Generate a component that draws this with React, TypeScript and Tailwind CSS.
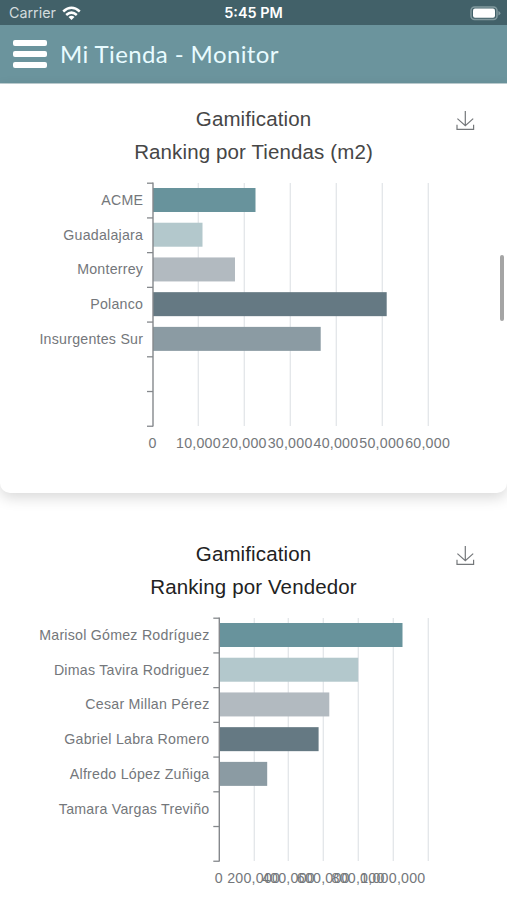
type Row = { name: string; end: number };

const COLORS = ["#68939c", "#b3c8cc", "#b2bac0", "#657983", "#8b9ba3"];

const tiendas: Row[] = [
  { name: "ACME", end: 255.5 },
  { name: "Guadalajara", end: 202.5 },
  { name: "Monterrey", end: 235 },
  { name: "Polanco", end: 386.7 },
  { name: "Insurgentes Sur", end: 320.7 },
];

const vendedores: Row[] = [
  { name: "Marisol Gómez Rodríguez", end: 402.5 },
  { name: "Dimas Tavira Rodriguez", end: 358.2 },
  { name: "Cesar Millan Pérez", end: 329.3 },
  { name: "Gabriel Labra Romero", end: 318.6 },
  { name: "Alfredo López Zuñiga", end: 267.2 },
  { name: "Tamara Vargas Treviño", end: 219 },
];

const RIGHT = 428;
const ROW_H = 34.72;

function BarChart({ rows, left, ticks }: { rows: Row[]; left: number; ticks: string[] }) {
  const step = (RIGHT - left) / 6;
  return (
    <svg className="block w-full" height="280" viewBox="0 0 507 280" fontFamily="'Liberation Sans', Arial, sans-serif" fontSize="14.2" letterSpacing="0.24" fill="#74777b">
      {[1, 2, 3, 4, 5, 6].map((i) => (
        <path key={i} d={`M${Math.floor(left + i * step) + 0.3} 4V247`} stroke="#e3e6e9" strokeWidth="1.3" />
      ))}
      {rows.map((r, i) => (
        <g key={r.name}>
          {r.end > left && (
            <rect x={left} y={9 + i * ROW_H} width={r.end - left} height="24" fill={COLORS[i]} />
          )}
          <text x={left - 9.8} y={26 + i * ROW_H} textAnchor="end">{r.name}</text>
        </g>
      ))}
      <path d={`M${left} 3.5V247.5`} stroke="#85888c" strokeWidth="1.4" />
      {[0, 1, 2, 3, 4, 5, 6, 7].map((i) => (
        <path key={i} d={`M${left - 6} ${4.2 + i * ROW_H}H${left}`} stroke="#85888c" strokeWidth="1.3" />
      ))}
      {ticks.map((t, i) => (
        <text key={t} x={left - 0.4 + i * step} y="268.7" textAnchor="middle">{t}</text>
      ))}
    </svg>
  );
}

function DownloadIcon() {
  return (
    <svg className="absolute right-8 top-[8px]" width="20" height="22" viewBox="0 0 20 22" fill="none" stroke="#74777a" strokeWidth="1.2">
      <path d="M10.3 1V15.5M2.4 8.6L10.3 15.6L18.2 8.6M2 14.8V19.4H18.6V14.8" />
    </svg>
  );
}

function ChartTitle({ title, className }: { title: string; className: string }) {
  return (
    <div className={"relative text-center text-[20.5px] leading-[33px] tracking-[0.12px] " + className}>
      <h2>Gamification</h2>
      <h2>{title}</h2>
      <DownloadIcon />
    </div>
  );
}

export default function App() {
  return (
    <div className="relative h-[900px] w-full overflow-hidden bg-white font-['Liberation_Sans',Arial,sans-serif]">
      <div className="flex h-[25px] items-center bg-[#426169] px-[9px] pt-[2px] font-['Inter',sans-serif] text-sm text-white">
        <div className="flex flex-1 items-center gap-1.5">
          <span className="text-[#d3dcde] text-[14.3px]">Carrier</span>
          <svg width="19" height="15" viewBox="0 0 19 15" fill="none" stroke="#fff" strokeWidth="2.5">
            <path d="M1.2 5.5Q9.5 -2 17.8 5.5" />
            <path d="M4.2 9Q9.5 4.3 14.8 9" />
            <path d="M9.5 14L6.5 11Q9.5 8.7 12.5 11Z" fill="#fff" stroke="none" />
          </svg>
        </div>
        <span className="text-[14.4px] font-semibold">5:45 PM</span>
        <div className="flex flex-1 justify-end">
          <svg className="-mr-[3px]" width="31" height="15" viewBox="0 0 31 15">
            <rect x="1" y="1" width="26" height="12.5" rx="3.5" fill="none" stroke="#829a9f" strokeWidth="1.5" />
            <rect x="3" y="2.6" width="22" height="9.2" rx="2" fill="#fff" />
            <path d="M28.4 5V9.6Q30.4 8.6 30.4 7.3T28.4 5Z" fill="#829a9f" />
          </svg>
        </div>
      </div>
      <header className="flex h-[59px] items-center gap-[13px] border-b border-[#bfd0d3] bg-[#6b949d] pl-[13px]">
        <button className="flex w-[34px] flex-col gap-[5px]">
          <span className="h-[6px] rounded-[2px] bg-white" />
          <span className="h-[6px] rounded-[2px] bg-white" />
          <span className="h-[6px] rounded-[2px] bg-white" />
        </button>
        <h1 className="font-['Lato',sans-serif] text-2xl tracking-[0.4px] text-[#e8fbff]">Mi Tienda - Monitor</h1>
      </header>

      <section className="h-[409px] rounded-b-[10px] bg-white pt-[18px] shadow-[0_5px_14px_rgba(0,0,0,0.15)]">
        <ChartTitle title="Ranking por Tiendas (m2)" className="text-[#464646] mb-[11px]" />
        <BarChart rows={tiendas} left={153} ticks={["0", "10,000", "20,000", "30,000", "40,000", "50,000", "60,000"]} />
      </section>

      <section className="mt-[26px] bg-white pt-[18px]">
        <ChartTitle title="Ranking por Vendedor" className="text-[#222] mb-[11px]" />
        <BarChart rows={vendedores} left={219.3} ticks={["0", "200,000", "400,000", "600,000", "800,000", "1,000,000"]} />
      </section>

      {/* scroll indicator */}
      <div className="absolute right-[3px] top-[255px] h-[66px] w-1 rounded-full bg-[#a5a5a5]" />
    </div>
  );
}
